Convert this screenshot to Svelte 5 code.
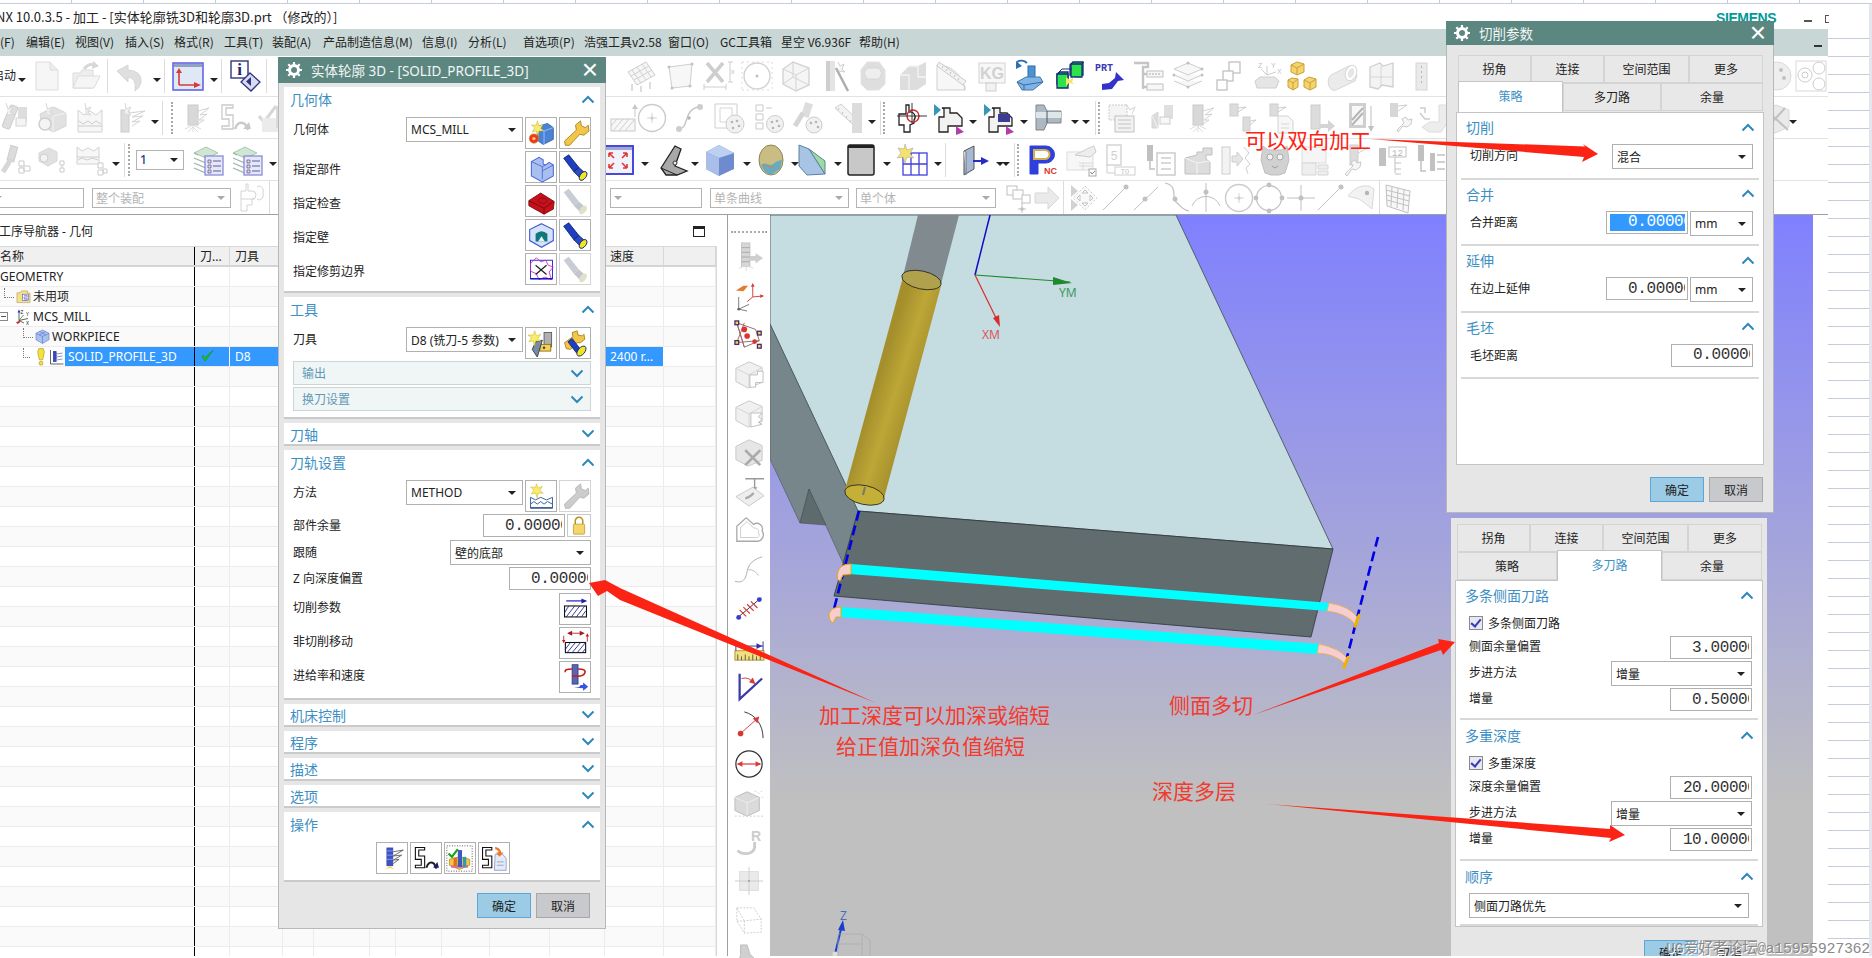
<script>
	// grey disabled toolbar art + a few coloured ones, all on a 32x32 box
	const G = '#b9b9b9';
	const ICONS = {
		doc: `<path d="M5 2h14l8 8v20H5z" fill="#f3f3f3" stroke="#d0d0d0"/><path d="M19 2v8h8" fill="#e6e6e6" stroke="#d0d0d0"/>`,
		folder: `<path d="M3 13h7l2-3h11v18H3z" fill="#e8e8e8" stroke="#cfcfcf"/><path d="M3 28l5-12h22l-6 12z" fill="#f2f2f2" stroke="#cfcfcf"/><path d="M14 9q6-7 11-3" stroke="#c8c8c8" stroke-width="3" fill="none"/><path d="M23 1l6 5-7 3z" fill="#c8c8c8"/>`,
		undo: `<path d="M3 11l11-6v5q14 1 13 12-1 6-6 9 2-13-7-14v5z" fill="#d4d4d4" stroke="#c6c6c6"/>`,
		wcs: `<rect x="1" y="3" width="30" height="27" fill="#dfe9f6" stroke="#5a5ae6" stroke-width="1.5"/><rect x="2" y="4" width="28" height="3" fill="#8fa2c4"/><path d="M7 25V11M7 25h17" stroke="#d83a3a" stroke-width="1.6"/><path d="M4 13l3-5 3 5zM22 22l7 3-7 3z" fill="#d83a3a"/>`,
		info: `<rect x="2" y="1" width="17" height="17" fill="#fff" stroke="#33337f" stroke-width="1.4"/><text x="10.5" y="15" font-size="17" font-weight="700" font-family="Liberation Serif" text-anchor="middle" fill="#25256b">i</text><path d="M21 13l10 9-9 9-10-9z" fill="#d8dcf2" stroke="#33337f" stroke-width="1.3"/><path d="M22 17v9l-5-4.500z" fill="#33337f"/>`,
		spiralp: `<rect x="8" y="3" width="8" height="24" rx="2" transform="rotate(22 12 15)" fill="#d2d2d2" stroke="#bdbdbd"/><rect x="20" y="5" width="9" height="15" fill="#d0d0d0"/><rect x="18" y="16" width="10" height="8" fill="#f0f0f0" stroke="#c4c4c4"/><path d="M8 1l2 6 5-3-3 6 4 2-6 1" fill="#eee" stroke="#c8c8c8"/>`,
		camera: `<path d="M4 12l14-7 12 6v13l-13 6-11-6z" fill="#d6d6d6" stroke="#c6c6c6"/><path d="M17 14l13-3M17 14v16" stroke="#eee"/><circle cx="9" cy="22" r="6" fill="#f1f1f1" stroke="#bcbcbc" stroke-width="1.5"/><path d="M10 1l1.500 6 5-2-3 5 4 3-6 0" fill="#e8e8e8" stroke="#cacaca"/>`,
		waves: `<path d="M4 8l6 5 6-4 6 4 6-5v22H4z" fill="#f3f3f3" stroke="#c2c2c2"/><path d="M5 19l4 3 5-3 4 3 4-3 5 3M4 24h24" stroke="${G}" fill="none"/><path d="M11 1l1 6 5-2-3 5 3 3-6-1" fill="#e4e4e4" stroke="#cacaca"/>`,
		millplan: `<rect x="7" y="8" width="8" height="22" fill="#cfcfcf" stroke="${G}"/><path d="M15 11l16-2-13 6 11-1-11 6 8-1-8 5" fill="none" stroke="#c4c4c4"/><path d="M11 1l1 6 5-2-3 5 3 3-6-1" fill="#ececec" stroke="#cacaca"/>`,
		drillstar: `<rect x="9" y="3" width="10" height="20" fill="#cacaca" stroke="#b8b8b8"/><path d="M19 9l11-3-9 7 7-1-8 6 5 0-6 4" fill="none" stroke="#c2c2c2"/><path d="M6 27l8-4 8 4M14 23v7M9 30l5-5 5 5" stroke="#d0d0d0" fill="none"/>`,
		sarrow: `<path d="M3 3h11v3H7v7h7v14H3v-3h7v-7H3zm0 0" fill="#fff" stroke="#b6b6b6" stroke-width="1.300"/><path d="M16 27q3-9 10-5l3 6" fill="none" stroke="#b6b6b6" stroke-width="2.400"/><path d="M24 27h8l-2-7z" fill="#b6b6b6"/>`,
		spt: `<rect x="10" y="2" width="7" height="15" fill="#cfcfcf" stroke="${G}" transform="rotate(15 13 9)"/><path d="M4 28l8-13" stroke="#c9c9c9" stroke-width="5"/><path d="M20 17h5v5h-5zM20 24h5v5h-5zM25 27h6v-5h-6zM22 22v2" fill="#fff" stroke="${G}"/>`,
		camt: `<path d="M3 9l10-5 8 4v9l-9 5-9-5z" fill="#d6d6d6" stroke="#c8c8c8"/><circle cx="8" cy="14" r="4" fill="#eee" stroke="#bcbcbc"/><path d="M24 17h4v4h-4zM24 24h4v4h-4zM26 21v3" fill="#fff" stroke="${G}"/>`,
		wavt: `<path d="M1 3l5 4 6-3 6 3 5-4v17H1z" fill="#f5f5f5" stroke="#c2c2c2"/><path d="M1 13h22M2 16l4-2 5 2 5-2 6 2" stroke="${G}" fill="none"/><path d="M22 19h5v5h-5zM22 26h5v5h-5zM27 29h4v-4h-4z" fill="#fff" stroke="${G}"/>`,
		layer: `<path d="M2 9l12-6 12 6-12 5z" fill="#cfe6d2" stroke="#a8c8ae"/><path d="M2 14l12 5 5-2M2 19l12 5 5-2M2 24l12 5 5-2M2 9l4 2" stroke="#9fb5a4" fill="none" stroke-width="1.200"/><rect x="13" y="12" width="18" height="19" fill="#e5e7fa" stroke="#8a8ad8" stroke-width="1.300"/><path d="M16 16h3v3h-3zM16 21h3v3h-3zM16 26h3v3h-3z" fill="#f2e47e" stroke="#4a4ad0" stroke-width=".7"/><path d="M21 17h8M21 22h8M21 27h8" stroke="#5d5d90"/>`,
		ghost: `<path d="M6 9h5V2h2v7h4a4 4 0 1 1 0 8v6h-5v6H6zM22 5a4 5 0 0 1 6 6 4 5 0 0 1-6 6" fill="#fff" stroke="#c4c4c4"/><path d="M6 17h14" stroke="#c4c4c4"/>`,
		sumcheck: `<path d="M3 14l5 6 12-16" stroke="#c8c8c8" stroke-width="3" fill="none"/><rect x="6" y="16" width="24" height="14" fill="#e4e4e4"/><rect x="20" y="4" width="8" height="22" fill="#cdcdcd"/>`,
		grid: `<path d="M4 12L22 2l9 13-18 10z" fill="#f3f3f3" stroke="#bcbcbc"/><path d="M8 10l9 13M13 7l9 13M18 4l9 13M7 16L25 6M10 20l18-10" stroke="#c2c2c2"/><path d="M8 24v7M17 26v6M26 22v7" stroke="#bdbdbd" stroke-width="1.400"/>`,
		quad: `<path d="M5 7l23-3-2 22-18 2z" fill="#f5f5f5" stroke="#bdbdbd"/><circle cx="5" cy="7" r="1.500" fill="#aaa"/><circle cx="28" cy="4" r="1.500" fill="#aaa"/><circle cx="26" cy="26" r="1.500" fill="#aaa"/><circle cx="8" cy="28" r="1.500" fill="#aaa"/>`,
		xdim: `<path d="M5 3l16 19M21 3L5 22" stroke="#bcbcbc" stroke-width="3.500"/><path d="M2 27h22M2 24v6M24 24v6M26 2h5M26 22h5M28 2v20" stroke="#bcbcbc" fill="none"/><text x="29" y="14" font-size="7" fill="#aaa" font-family="Liberation Sans">x</text>`,
		circdots: `<circle cx="16" cy="16" r="13" fill="#fff" stroke="#c2c2c2" stroke-width="1.400"/><circle cx="16" cy="16" r="1.500" fill="#aaa"/><path d="M1 2h30M1 30h30M1 2v28M31 2v28" stroke="#d0d0d0" stroke-dasharray="2 3"/>`,
		wirebox: `<path d="M3 9l10-7 16 6v17l-13 6-13-7z" fill="#f2f2f2" stroke="#c4c4c4" stroke-width="1.400"/><path d="M3 9l13 6v16M16 15l13-7M13 2v15L3 24M13 17l16 8" stroke="#c4c4c4" fill="none"/>`,
		wand: `<rect x="6" y="1" width="9" height="30" fill="#dbdbdb"/><rect x="6" y="1" width="4" height="30" fill="#bdbdbd"/><path d="M16 8l12 23" stroke="#8f8f8f" stroke-width="2.500"/><path d="M18 2l2 4 4-2-2 5 3 3-6-1" fill="#f4f4f4" stroke="#bdbdbd"/>`,
		hex: `<path d="M10 2h12l6 8v14l-6 6H10l-6-6V10z" fill="#d2d2d2" stroke="#d8d8d8"/><path d="M10 8h12l3 5-3 6H10l-3-6z" fill="#e8e8e8" stroke="#c8c8c8"/>`,
		step: `<path d="M3 15l9-9h9l8-4v22l-9 6H3z" fill="#d0d0d0"/><path d="M12 6h9v11h8M3 15h9v15" stroke="#efefef" fill="none" stroke-width="1.400"/>`,
		ruler: `<path d="M2 30V5L30 26v4zM2 5c16 0 26 12 28 25" fill="#f5f5f5" stroke="#bdbdbd"/><path d="M4 2l27 19-3 4L2 6z" fill="#eee" stroke="#b8b8b8"/><path d="M8 6l-1 2M12 9l-1 2M16 12l-1 2M20 15l-1 2M24 18l-1 2" stroke="#aaa"/>`,
		kg: `<rect x="3" y="3" width="26" height="20" fill="#f5f5f5" stroke="#c4c4c4"/><text x="16" y="19" font-size="16" font-weight="700" font-family="Liberation Sans" text-anchor="middle" fill="#c0c0c0">KG</text><rect x="10" y="23" width="10" height="8" fill="#eee" stroke="#bbb"/>`,
		mount: `<path d="M3 2a8 8 0 0 1 10 1" stroke="#2d6fb5" stroke-width="2" fill="none"/><path d="M2 1v8l6-3z" fill="#2d6fb5"/><rect x="14" y="6" width="7" height="15" fill="#4d93d3" stroke="#2c6da8"/><path d="M3 22l9-5h14l3 5-10 8H8z" fill="#7eb4e6" stroke="#4579ab"/><path d="M3 22l7 3 19-3M10 25v5" stroke="#3a6c9f" fill="none"/>`,
		green: `<path d="M3 14l3-2h8v12H3zM16 5l3-3h10v13h-3l-10 0z" fill="#1be041" stroke="#1a2a7a" stroke-width="1.300"/><path d="M3 14h11v14H3zM17 4h11v13H17z" fill="#2be34a" stroke="#1a2a7a" stroke-width="1.300"/><path d="M3 14l5-5h10M28 4l2-2" stroke="#1a2a7a" fill="none"/><path d="M12 17l4 3 4-3-2 5 2 2-5-1-3 3v-5z" fill="#f5e56b"/>`,
		prt: `<text x="1" y="11" font-size="10" font-weight="700" font-family="Liberation Mono" fill="#3a3ab4">PRT</text><path d="M8 30l10-1 6-8 6-1-8-8-1 6-6 5-7 1z" fill="#3333cc"/>`,
		tree: `<path d="M2 3h14v4h-5v22M11 14h5M11 27h5" stroke="#b0b0b0" stroke-width="2.400" fill="none"/><rect x="15" y="11" width="16" height="6" fill="#f5f5f5" stroke="#aaa"/><rect x="15" y="24" width="16" height="6" fill="#f5f5f5" stroke="#aaa"/><path d="M18 13v2M21 13v2M24 13v2M27 13v2" stroke="#888"/>`,
		layers: `<path d="M2 9L16 3l14 6-14 6zM2 15l14 6 14-6M2 21l14 6 14-6" fill="#f4f4f4" stroke="#bcbcbc"/><circle cx="16" cy="3" r="1.500" fill="#aaa"/><circle cx="30" cy="9" r="1.500" fill="#aaa"/><circle cx="2" cy="15" r="1.500" fill="#aaa"/><circle cx="30" cy="15" r="1.500" fill="#aaa"/><circle cx="16" cy="27" r="1.500" fill="#aaa"/>`,
		steps: `<rect x="17" y="2" width="11" height="11" fill="#fff" stroke="#aaa" stroke-width="1.300"/><rect x="11" y="11" width="10" height="10" fill="#fff" stroke="#aaa" stroke-width="1.300"/><rect x="5" y="20" width="10" height="10" fill="#fff" stroke="#aaa" stroke-width="1.300"/>`,
		zyx: `<path d="M4 21l5-4h15l4 4-3 7H6z" fill="#dcdcdc" stroke="#bdbdbd"/><path d="M16 15V6M16 15l-6-6M16 15l9-3" stroke="#bbb"/><text x="7" y="8" font-size="7" fill="#aaa" font-family="Liberation Sans">Z</text><text x="20" y="8" font-size="7" fill="#aaa" font-family="Liberation Sans">Y</text><text x="26" y="14" font-size="7" fill="#aaa" font-family="Liberation Sans">X</text>`,
		gold: `<g fill="#f5d36f" stroke="#c9a135"><path d="M9 2l7 2v8l-7 3-6-3V5z"/><path d="M4 18l6 1v8l-5 3-5-3v-7z"/><path d="M21 17l7 2v8l-6 3-6-3v-7z"/></g><path d="M3 5l6 3 7-4M9 8v7M0 20l5 3 5-4M5 23v7M16 20l6 3 6-4M22 23v7" stroke="#c9a135" fill="none"/>`,
		cyl: `<path d="M4 15L22 6a6.500 9 0 0 1 6 15l-17 8a6 8 0 0 1-7-14z" fill="#e4e4e4" stroke="#c8c8c8"/><ellipse cx="24" cy="13" rx="5.500" ry="8" fill="#fff" stroke="#c8c8c8" transform="rotate(20 24 13)"/><ellipse cx="24" cy="13" rx="3" ry="5" fill="#ddd" transform="rotate(20 24 13)"/>`,
		sheet: `<path d="M4 7l10-4 3 3 10-3v24l-11-2-4 4-8-2z" fill="#efefef" stroke="#bdbdbd" stroke-width="1.300"/><path d="M15 6v21M4 17h23" stroke="#c8c8c8"/>`,
		bar: `<rect x="11" y="3" width="11" height="27" fill="#e2e2e2" stroke="#c6c6c6"/><path d="M16.500 6v20" stroke="#9a9a9a" stroke-dasharray="2 3"/>`,
		hatchup: `<rect x="4" y="17" width="24" height="12" fill="#f5f5f5" stroke="#b4b4b4"/><path d="M6 29l10-12M12 29l10-12M18 29l9-11M4 24l6-7" stroke="#bcbcbc"/><path d="M28 15V4" stroke="#b4b4b4"/><path d="M25 7l3-5 3 5z" fill="#b4b4b4"/>`,
		circpt: `<circle cx="16" cy="16" r="13.500" fill="#fff" stroke="#b8b8b8" stroke-width="1.400"/><circle cx="16" cy="16" r="1.500" fill="#999"/><path d="M16 11v10M11 16h10" stroke="#c4c4c4"/>`,
		curve: `<path d="M5 27c10 0 4-20 20-22" fill="none" stroke="#b0b0b0" stroke-width="1.400"/><circle cx="5" cy="27" r="3" fill="#bbb"/><circle cx="26" cy="5" r="3" fill="#bbb"/><circle cx="15" cy="16" r="1.800" fill="#999"/>`,
		framepal: `<path d="M2 2h22v24H2z" fill="#fff" stroke="#bcbcbc"/><path d="M7 6h12v14H7z" fill="none" stroke="#c6c6c6"/><circle cx="22" cy="22" r="9" fill="#ececec" stroke="#bbb"/><circle cx="19" cy="20" r="1.300" fill="#999"/><circle cx="24" cy="19" r="1.300" fill="#999"/><circle cx="26" cy="24" r="1.300" fill="#999"/><circle cx="20" cy="26" r="1.300" fill="#999"/>`,
		treepal: `<path d="M3 3h7v6H3zM3 12h7v6H3zM3 21h7v6H3zM13 6h6" fill="#fff" stroke="#b6b6b6"/><circle cx="22" cy="22" r="8.500" fill="#ececec" stroke="#bbb"/><circle cx="19" cy="20" r="1.300" fill="#999"/><circle cx="24" cy="19" r="1.300" fill="#999"/><circle cx="26" cy="24" r="1.300" fill="#999"/><circle cx="20" cy="26" r="1.300" fill="#999"/>`,
		toolpal: `<rect x="11" y="1" width="8" height="14" fill="#d0d0d0" transform="rotate(18 15 8)"/><path d="M3 24l8-13" stroke="#c6c6c6" stroke-width="5"/><circle cx="22" cy="23" r="8" fill="#ececec" stroke="#bbb"/><circle cx="19" cy="21" r="1.300" fill="#999"/><circle cx="24" cy="20" r="1.300" fill="#999"/><circle cx="26" cy="25" r="1.300" fill="#999"/>`,
		rulerv: `<path d="M3 6l6-4 21 20-3 6z" fill="#efefef" stroke="#bdbdbd"/><rect x="20" y="1" width="10" height="30" fill="#cfcfcf"/><path d="M7 6l-1 2M11 10l-1 2M15 14l-1 2M19 18l-1 2" stroke="#aaa"/>`,
		redcirc: `<path d="M3 12h7V3h3v7a5 5 0 0 1 5 8v3l-4 2v7H8v-7H3z" fill="#fff" stroke="#222" stroke-width="1.300"/><circle cx="17" cy="14" r="6" fill="none" stroke="#d8262c" stroke-width="1.400"/><path d="M1 14h30M16 1v20" stroke="#222" stroke-width=".9"/>`,
		nozzle1: `<path d="M1 2l7 6-7 6z" fill="#3896b8"/><path d="M9 6h8v5h7l5 5v8H15v6H6V15h5V7z" fill="#f2f2f2" stroke="#222" stroke-width="1.300"/><path d="M23 24l8 6-8 3z" fill="#b43dac"/>`,
		nozzle2: `<path d="M1 2l7 6-7 6z" fill="#3896b8"/><path d="M9 6h8v5h7l5 5v8H15v6H6V15h5V7z" fill="#f2f2f2" stroke="#222" stroke-width="1.300"/><path d="M15 12h12v8H15z" fill="#3c3c96"/><path d="M23 24l8 6-8 3z" fill="#b43dac"/>`,
		nozzle3: `<path d="M3 3h8l3 6h14v12H14l-3 7H3z" fill="#aeb8c0" stroke="#7a858c"/><path d="M3 10h25v6H3z" fill="#dfe6ea"/><path d="M14 9v12" stroke="#4b5860"/>`,
		clip: `<rect x="3" y="3" width="18" height="15" fill="#f0f0f0" stroke="#bbb" stroke-dasharray="2 1"/><rect x="9" y="14" width="19" height="16" fill="#eee" stroke="#aaa"/><path d="M12 18h13M12 22h13M12 26h13" stroke="#aaa"/><path d="M20 2l4 6 5-3-3 7" stroke="#c4c4c4" fill="none"/>`,
		barrel: `<path d="M6 14l6-4v16H6z" fill="#cfcfcf" stroke="#c6c6c6"/><path d="M6 14l6 12" stroke="#eee"/><rect x="18" y="3" width="9" height="14" fill="#d4d4d4"/><rect x="14" y="15" width="10" height="7" fill="#f5f5f5" stroke="#bbb"/>`,
		opl1: `<rect x="6" y="2" width="8" height="12" fill="#cfcfcf" stroke="#bbb"/><path d="M14 6l8-1-8 5" stroke="#bbb" fill="none"/><rect x="19" y="15" width="7" height="14" fill="#cfcfcf" stroke="#bbb"/><path d="M26 19l6-1-6 5" stroke="#bbb" fill="none"/>`,
		opl2: `<rect x="6" y="2" width="8" height="12" fill="#cfcfcf" stroke="#bbb"/><path d="M14 6l8-1-8 5" stroke="#bbb" fill="none"/><path d="M14 14h10l5 5v12H14z" fill="#f4f4f4" stroke="#c4c4c4"/><path d="M17 22h8M17 26h8" stroke="#c8c8c8"/>`,
		oparrow: `<rect x="7" y="3" width="9" height="24" fill="#cfcfcf" stroke="#bbb"/><path d="M16 22h8v-4l7 6-7 6v-4h-8z" fill="#c4c4c4"/>`,
		hatcht: `<rect x="6" y="1" width="17" height="25" fill="#bdbdbd"/><rect x="9" y="4" width="11" height="19" fill="#f6f6f6"/><path d="M9 18l11-12M9 23l11-12" stroke="#999" stroke-width="2"/><path d="M28 4v22" stroke="#a8a8a8"/><path d="M25 24h6l-3 6z" fill="#a8a8a8"/>`,
		wrench2: `<rect x="6" y="1" width="8" height="14" fill="#c8c8c8"/><path d="M14 4l9-1-9 6" stroke="#bbb" fill="none"/><path d="M13 28l7-7-2-4 4-2 2 3 4-1-1 5-4 3-4-1-5 6z" fill="#f3f3f3" stroke="#b6b6b6"/>`,
		machine: `<path d="M22 3h8v18l-6 9H12l-7-5 8-5h9z" fill="#e7e7e7" stroke="#d0d0d0"/><path d="M3 6h5v5M3 11l5 6h5" stroke="#bbb" fill="none" stroke-width="1.500"/>`,
		full: `<rect x="1" y="2" width="30" height="28" fill="#f0f3fb" stroke="#4848e0" stroke-width="2"/><rect x="2" y="3" width="28" height="3" fill="#9fa8d0"/><path d="M7 9l5 5M7 9v4M7 9h4M25 24l-5-5M25 24v-4M25 24h-4M25 9l-5 5M25 9v4M25 9h-4M7 24l5-5M7 24v-4M7 24h4" stroke="#e4352d" stroke-width="1.600" fill="none"/>`,
		lshape: `<path d="M4 24L18 2l6 3-6 17 12 5-10 4H9z" fill="#a8a8a8" stroke="#222" stroke-width="1.300"/><path d="M4 24l16 7" stroke="#222"/><circle cx="18" cy="19" r="2" fill="#eee" stroke="#333"/>`,
		bluebox: `<path d="M2 8L15 1l15 8v16l-15 7-13-7z" fill="#6f8bd0"/><path d="M2 8l13 6 15-5-15-8z" fill="#bcd0f2"/><path d="M2 8l13 6v18L2 25z" fill="#a9bfea"/>`,
		egg: `<ellipse cx="16" cy="16" rx="12" ry="15" fill="#c9bd83" stroke="#8a8558"/><path d="M6 21c5-4 8 2 12-1s7-4 9-4l-2 9-9 6-6-3z" fill="#6aaac0"/><path d="M9 22c4-1 6 3 10 0" stroke="#c84" fill="none"/>`,
		wedge: `<path d="M4 1l10 4 16 25-18 1-8-9z" fill="#a7c4e4" stroke="#5c7fa4"/><path d="M14 5l16 12 0 13z" fill="#9edb9e" stroke="#5c7fa4"/>`,
		panel: `<rect x="3" y="1" width="26" height="30" rx="2" fill="#c8c8c8" stroke="#222" stroke-width="1.500"/><rect x="3" y="1" width="26" height="3" fill="#222"/>`,
		gridstar: `<rect x="6" y="9" width="24" height="22" fill="#fff" stroke="#4040dc" stroke-width="1.300"/><path d="M14 9v22M22 9v22M6 20h24" stroke="#4040dc" stroke-width="1.300"/><path d="M8 0l2 6 6-2-3 6 4 4-7-1-2 6-2-6-6 1 4-5-3-5 6 1z" fill="#f4e26a" stroke="#aaa" stroke-width=".6"/>`,
		plate: `<path d="M5 7l10-5v23l-10 6z" fill="#a7b8d4" stroke="#555"/><path d="M5 7l2 1v23" fill="#eee" stroke="#777"/><path d="M14 17h9" stroke="#2a2ac8" stroke-width="2"/><path d="M22 13l8 4-8 4z" fill="#2a2ac8"/>`,
		pnc: `<path d="M3 2h16a8 8 0 0 1 0 17h-8v11H3z" fill="#2e3fdc" stroke="#2e3fdc"/><path d="M7 6h11a4 4 0 0 1 0 9H7z" fill="#fff" stroke="#d1b04a" stroke-width="2"/><text x="17" y="30" font-size="9" font-weight="700" fill="#d8382f" font-family="Liberation Sans">NC</text>`,
		note: `<rect x="2" y="8" width="26" height="18" fill="#f4f4f4" stroke="#cfcfcf"/><path d="M14 19h14M14 22h14M18 19v7" stroke="#ccc"/><path d="M10 11l14-7 5-2 2 6-6 5z" fill="#e7e7e7" stroke="#bbb"/><rect x="24" y="25" width="7" height="7" fill="#fff" stroke="#888"/><path d="M25.500 28l1.500 2 3-3" stroke="#555" fill="none"/>`,
		sto: `<rect x="3" y="1" width="14" height="20" fill="#fff" stroke="#bdbdbd" stroke-width="1.300"/><text x="10" y="16" font-size="12" fill="#bdbdbd" font-family="Liberation Mono" text-anchor="middle">5</text><path d="M3 21v8h8" stroke="#bbb" fill="none"/><rect x="11" y="23" width="20" height="8" fill="#fff" stroke="#bdbdbd"/><text x="21" y="30" font-size="7" fill="#aaa" font-family="Liberation Mono" text-anchor="middle">TO</text>`,
		arrowl: `<rect x="3" y="1" width="6" height="16" fill="#a8a8a8"/><path d="M6 17v8h5" stroke="#aaa" fill="none" stroke-width="1.500"/><rect x="13" y="9" width="18" height="22" fill="#fff" stroke="#bdbdbd" stroke-width="1.600"/><path d="M17 14h10M17 19h10M17 25h10" stroke="#bbb" stroke-width="1.500"/>`,
		machbox: `<path d="M4 14l12-3v-3h6V4h9v7h-6v4l4 3v12H4z" fill="#d0d0d0" stroke="#a8a8a8"/><path d="M4 14l12 5 13-2M16 19v11" stroke="#f1f1f1" fill="none"/>`,
		doorzig: `<rect x="2" y="3" width="8" height="27" fill="#efefef" stroke="#bcbcbc"/><path d="M12 12h5v-4l6 7-6 7v-4h-5z" fill="#dcdcdc" stroke="#bcbcbc"/><path d="M24 3l5 6-4 5 5 6-4 4 2 6" fill="none" stroke="#bcbcbc"/>`,
		owl: `<path d="M4 2l5 4h14l5-4 2 14-4 13-6 2h-8l-6-2-4-13z" fill="#c0c0c0" stroke="#a6a6a6"/><circle cx="11" cy="13" r="3" fill="#eee" stroke="#888"/><circle cx="21" cy="13" r="3" fill="#eee" stroke="#888"/><path d="M13 22l3 2 3-2" stroke="#777" fill="none"/>`,
		sbox: `<rect x="4" y="3" width="24" height="16" fill="#f2f2f2" stroke="#d0d0d0"/><path d="M4 19h14v12H4zM20 21h10v4H20zM20 27h10v4H20z" fill="#e8e8e8" stroke="#c6c6c6"/>`,
		mwrench: `<rect x="11" y="1" width="8" height="20" fill="#cfcfcf" stroke="#bbb"/><path d="M19 5l10-1-10 5" stroke="#bbb" fill="none"/><path d="M6 30l8-8-2-4 4-2 2 3 4-1-1 5-4 3-4-1-5 7z" fill="#f3f3f3" stroke="#b6b6b6"/>`,
		tree12: `<rect x="2" y="4" width="7" height="18" fill="#aaa"/><rect x="12" y="3" width="17" height="10" fill="#fff" stroke="#aaa"/><text x="20.500" y="12" font-size="9" fill="#999" font-family="Liberation Mono" text-anchor="middle">12</text><path d="M18 13v16M18 19h6M18 25h6M18 30h6" stroke="#aaa"/>`,
		arrowt: `<rect x="3" y="1" width="6" height="16" fill="#a8a8a8"/><path d="M6 17v10h5" stroke="#aaa" fill="none" stroke-width="1.500"/><rect x="15" y="9" width="5" height="18" fill="#aaa"/><path d="M22 11h8M22 18h8M22 25h8" stroke="#aaa" stroke-width="1.500"/>`,
		treea: `<rect x="3" y="4" width="10" height="9" fill="#fff" stroke="#aaa"/><rect x="9" y="8" width="10" height="9" fill="#fff" stroke="#aaa"/><rect x="18" y="13" width="8" height="8" fill="#fff" stroke="#aaa"/><path d="M18 21v10M14 27h8" stroke="#aaa"/><circle cx="18" cy="27" r="1.800" fill="#aaa"/>`,
		arrowr: `<path d="M4 11h13V5l11 11-11 11v-6H4z" fill="#e2e2e2" stroke="#c8c8c8"/>`,
		diamond: `<path d="M2 3l7 6-7 6zM2 17l7 6-7 6z" fill="#c2c2c2"/><path d="M16 4l12 12-12 12L4 16z" fill="#f7f7f7" stroke="#bbb" stroke-dasharray="2 2"/><path d="M16 8l3 3h-6zM16 24l3-3h-6zM8 16l3-3v6zM24 16l-3-3v6z" fill="#fff" stroke="#aaa"/>`,
		line1: `<path d="M4 28L27 5" stroke="#aaa"/><circle cx="27" cy="5" r="2.500" fill="#aaa"/>`,
		line2: `<path d="M4 28L28 5" stroke="#aaa"/><circle cx="15" cy="17" r="2.500" fill="#aaa"/>`,
		curve2: `<path d="M5 1c14 3 6 15 11 19s6 8 13 9" fill="none" stroke="#a8a8a8" stroke-width="1.200"/><circle cx="15" cy="17" r="2.500" fill="#aaa"/>`,
		arc: `<path d="M2 24a15 15 0 0 1 28 0M16 1v29" stroke="#a8a8a8" fill="none"/><circle cx="16" cy="10" r="2.500" fill="#aaa"/>`,
		circ4: `<circle cx="16" cy="16" r="12.500" fill="none" stroke="#aaa" stroke-width="1.200"/><g fill="#aaa"><circle cx="16" cy="3" r="2.400"/><circle cx="16" cy="29" r="2.400"/><circle cx="3" cy="16" r="2.400"/><circle cx="29" cy="16" r="2.400"/></g>`,
		cross: `<path d="M2 16h28M16 3v26" stroke="#aaa"/><circle cx="16" cy="16" r="2.500" fill="#aaa"/>`,
		surf: `<path d="M3 14Q12 2 24 4l5 3-2 20-10-8c-5-4-10-3-14-5z" fill="#eee" stroke="#ccc"/><circle cx="22" cy="11" r="2.200" fill="#999"/>`,
		mesh: `<path d="M4 3l24 6-2 22L5 24z" fill="#f5f5f5" stroke="#aaa"/><path d="M10 4.500l-1 20M16 6l-1 20M22 7.500l-1 21M4 8l24 6M4 13l23 6M5 18l22 6" stroke="#aaa"/>`,
		palette2: `<circle cx="16" cy="16" r="14" fill="#e8e8e8" stroke="#ccc"/><circle cx="11" cy="11" r="2" fill="#aaa"/><circle cx="20" cy="10" r="2" fill="#aaa"/><circle cx="23" cy="18" r="2" fill="#aaa"/>`,
		circles3: `<rect x="1" y="1" width="30" height="30" fill="#fff" stroke="#ccc"/><circle cx="10" cy="15" r="7" fill="none" stroke="#bbb"/><circle cx="10" cy="15" r="3" fill="none" stroke="#bbb"/><circle cx="24" cy="8" r="6" fill="none" stroke="#bbb"/><circle cx="24" cy="24" r="6" fill="none" stroke="#bbb"/>`,
		boxg: `<path d="M1 9l14-6 13 5v17l-14 6-13-6z" fill="#e2e2e2" stroke="#ccc"/><path d="M3 6l24 22M24 6L6 26" stroke="#aaa" stroke-width="2"/>`,
		// left strip
		millar: `<rect x="8" y="1" width="9" height="25" fill="#d6d6d6" stroke="#c6c6c6"/><path d="M8 6h9M8 11h9M8 16h9M8 21h9" stroke="#aaa"/><path d="M17 15h6v-3l8 5-8 6v-3h-6z" fill="#cfcfcf"/><path d="M5 28l8-3 8 3M13 26v5" stroke="#ddd" fill="none"/>`,
		axes: `<path d="M2 10l8-5h5l-5 6z" fill="#e67a2e"/><path d="M20 17V4M20 17l11-1M20 17l-6 5" stroke="#d83a3a"/><path d="M18 6l2-4 2 4zM28 14l4 2-4 2z" fill="#d83a3a"/><path d="M5 30V17M5 30l11-5M5 30l9 2" stroke="#777"/><circle cx="5" cy="30" r="1.500" fill="#666"/>`,
		nodes: `<path d="M3 3l8 26M3 3l20 7 4 12-16 7zM3 24l24-2M3 24l8-21" fill="none" stroke="#9a6666"/><g fill="#d8362e"><circle cx="11" cy="10" r="3"/><circle cx="14" cy="17" r="3"/><circle cx="22" cy="23" r="2.500"/></g><g fill="#f1d84b" stroke="#4a2a70" stroke-width="1.400"><rect x="1" y="1" width="4" height="4"/><rect x="25" y="12" width="4" height="4"/><rect x="1" y="22" width="4" height="4"/><rect x="25" y="26" width="4" height="4"/></g>`,
		cube1: `<path d="M2 10l14-7 14 6v16l-15 6-13-7z" fill="#f0f0f0" stroke="#c8c8c8"/><path d="M2 10l14 7 14-8M16 17v14" stroke="#d4d4d4" fill="none"/><path d="M17 17h8v-4h6v12h-8v5h-6z" fill="#fff" stroke="#bcbcbc"/>`,
		cube2: `<path d="M2 10l14-7 14 6v16l-15 6-13-7z" fill="#f0f0f0" stroke="#c8c8c8"/><path d="M2 10l14 7 14-8M16 17v14" stroke="#d4d4d4" fill="none"/><path d="M18 16h12l-4 4 4 3-4 3 4 2-12 3z" fill="#fff" stroke="#bcbcbc"/>`,
		cube3: `<path d="M2 10l14-7 14 6v16l-15 6-13-7z" fill="#e6e6e6" stroke="#c8c8c8"/><path d="M12 14l16 16M28 14L12 30" stroke="#aaa" stroke-width="3"/>`,
		stamp: `<path d="M12 3h20M22 3v10" stroke="#999" stroke-width="1.500"/><path d="M19 12h6l-3 4z" fill="#999"/><path d="M2 22L20 12l12 9-16 11z" fill="#eee" stroke="#c8c8c8"/><path d="M12 24q6-2 9-6" stroke="#aaa" stroke-width="2.500" fill="none"/>`,
		heart: `<path d="M3 12L13 3l8 7a6 6 0 0 1 9 7 7 7 0 0 1-5 11H3z" fill="#fff" stroke="#aaa" stroke-width="1.400"/><path d="M7 13l7-6 7 7a4 4 0 0 1 5 5 3 3 0 0 1-3 5H7z" fill="none" stroke="#ccc"/>`,
		curvs: `<path d="M1 29c12 4 12-8 14-14s8-10 15-12" stroke="#aaa" fill="none"/><path d="M14 17c4-1 9 1 12 6" stroke="#bbb" fill="none"/>`,
		redh: `<path d="M3 27L29 5" stroke="#333" stroke-width="1"/><path d="M6 18l7 7M10 15l7 7M14 12l7 7M18 9l7 7" stroke="#d83a3a" stroke-width="1.300"/><circle cx="5" cy="26" r="2.600" fill="#3a3ad0"/><circle cx="27" cy="7" r="2.600" fill="#3a3ad0"/>`,
		rulerb: `<rect x="1" y="20" width="31" height="10" fill="#f2e07f" stroke="#a9932f"/><path d="M4 24v6M8 26v4M12 24v6M16 26v4M20 24v6M24 26v4M28 24v6" stroke="#555"/><path d="M2 15h29M2 10v10M31 10v10" stroke="#3030a8" fill="none"/><path d="M3 15l6-3v6zM30 15l-6-3v6z" fill="#3030a8"/>`,
		tri: `<path d="M6 3v27L30 8" stroke="#3a3aa8" stroke-width="2.400" fill="none"/><path d="M8 8q8-2 12 4" stroke="#d83a3a" fill="none"/><path d="M20 7l3 7-7-2z" fill="#d83a3a"/>`,
		arcr: `<path d="M11 2c12 3 20 14 20 28" stroke="#333" fill="none"/><path d="M7 25L24 10" stroke="#d83a3a"/><circle cx="7" cy="25" r="3" fill="#d8362e"/><path d="M20 9l7-2-2 7z" fill="#d83a3a"/>`,
		circr: `<circle cx="16" cy="16" r="14" fill="#fff" stroke="#333" stroke-width="1.300"/><path d="M4 16h24" stroke="#d83a3a" stroke-width="1.300"/><path d="M3 16l6-3v6zM29 16l-6-3v6z" fill="#d83a3a"/>`,
		cubedots: `<path d="M1 10l13-6 13 6v14l-13 6-13-6z" fill="#dadada" stroke="#bbb"/><path d="M1 10l13 6 13-6M14 16v14" stroke="#eee" fill="none"/><path d="M22 3l5 3 3-3M26 10h5M1 30h30" stroke="#ccc" stroke-dasharray="2 2" fill="none"/>`,
		rhook: `<text x="18" y="15" font-size="15" font-weight="700" fill="#ccc" font-family="Liberation Sans">R</text><path d="M22 16v6c-2 8-14 8-18 3" stroke="#ccc" stroke-width="3" fill="none"/>`,
		crossb: `<rect x="6" y="6" width="20" height="20" fill="#eaeaea" stroke="#ddd"/><path d="M16 1v30M1 16h30" stroke="#ccc"/><circle cx="16" cy="16" r="1" fill="#999"/>`,
		wire2: `<path d="M3 3l18 0 8 12v14l-18 1-8-13z" fill="#fff" stroke="#ccc" stroke-dasharray="2 1.500"/><path d="M3 17l8 0 18-2M11 17v13M3 3l8 14" stroke="#ccc" stroke-dasharray="2 1.500" fill="none"/>`,
		tooln: `<path d="M7 1h7l3 10 11 10-4 10H8l-4-10 3-9z" fill="#d0d0d0" stroke="#bbb"/>`,
		// dialog buttons
		gnew: `<path d="M11 8l12-4 7 5v14l-12 6-7-5z" fill="#4a83d6" stroke="#2e5fa8"/><path d="M11 8l8 5 11-4M19 13v16" stroke="#a9c9f2" fill="none"/><path d="M11 1l2 6 5-2-3 5 4 3-6 0-1 6-2-6-5 1 3-5-4-3 6 0z" fill="#f8ed6b" stroke="#c8b02e" stroke-width=".6"/><circle cx="7" cy="22" r="5.500" fill="#f0342a" stroke="#c82"/><circle cx="7" cy="22" r="2" fill="#f7d34e"/>`,
		wrench: `<path d="M3 25l14-13-1-6 6-5 1 6 5 2 3-3 1 7-6 5-5-1-12 13-5 0z" fill="#f2c648" stroke="#a77d16"/>`,
		wrenchg: `<path d="M3 25l14-13-1-6 6-5 1 6 5 2 3-3 1 7-6 5-5-1-12 13-5 0z" fill="#ccc" stroke="#b3b3b3"/>`,
		part: `<path d="M4 9l9-5 5 3v5l3 1 4-3 5 3v13l-13 7-13-7z" fill="#a8c0f0" stroke="#4d63d8" stroke-width="1.200"/><path d="M4 9l13 6v15M17 15l4-2M30 13l-13 7" stroke="#4d63d8" fill="none"/>`,
		flash: `<path d="M2 5l6-4 12 15-6 5z" fill="#1f3fc0" stroke="#0d226b"/><path d="M20 16l9 8-5 7-10-10z" fill="#2a4bc4" stroke="#0d226b"/><ellipse cx="25" cy="26" rx="6" ry="3.500" transform="rotate(-52 25 26)" fill="#f2e41f" stroke="#0d226b"/>`,
		flashg: `<path d="M2 5l6-4 12 15-6 5z" fill="#c8ccd4"/><path d="M20 16l9 8-5 7-10-10z" fill="#c2c6ce"/><ellipse cx="25" cy="26" rx="6" ry="3.500" transform="rotate(-52 25 26)" fill="#dfe2c8"/>`,
		redpart: `<path d="M1 15L15 6l16 10-1 9-11 6L1 21z" fill="#c8101a" stroke="#6c0a10"/><path d="M1 15l18 9 11-8M19 24v7" stroke="#6c0a10" fill="none"/><ellipse cx="17" cy="15" rx="5" ry="3" fill="none" stroke="#7c1018"/>`,
		wall: `<path d="M16 2L30 9v13l-14 8-14-8V9z" fill="#d5e2f8" stroke="#4058d8" stroke-width="1.300"/><path d="M9 23v-9q7-6 14 0v9z" fill="#10777f"/><path d="M12 23l4-6 4 6z" fill="#e8f4f4"/>`,
		trim: `<rect x="3" y="5" width="26" height="22" fill="#fff" stroke="#1010c8"/><path d="M3 9l7-7 5 5 6-2 3 6 6 2-5 6 3 9-8-3-7 3-3-7-7-3z" fill="none" stroke="#d020d0"/><path d="M9 11l13 11M22 11L9 22" stroke="#222" stroke-width="1.500"/><path d="M3 27h26" stroke="#1010c8" stroke-width="1.600"/>`,
		tstar: `<rect x="19" y="3" width="9" height="17" fill="#b0b0b0" stroke="#555"/><rect x="14" y="17" width="13" height="8" fill="#f6cf55" stroke="#8a6a10"/><circle cx="19" cy="21" r="1.500" fill="#444"/><path d="M9 14l8-2-6 20-6-9z" fill="#778ba8" stroke="#333"/><path d="M8 1l2 6 5-2-3 5 3 3-6 0-1 6-2-6-5 1 3-5-4-3 6 0z" fill="#f8ed6b" stroke="#c8b02e" stroke-width=".6"/>`,
		wrflash: `<path d="M3 15l10-7-1-5 6-2 1 5 5 1 2-2 1 6-5 4-4 0-8 8-5-1z" fill="#f2c648" stroke="#a77d16"/><path d="M7 14l5-4 10 13-5 4z" fill="#1f3fc0" stroke="#0d226b"/><ellipse cx="23" cy="25" rx="7" ry="4" transform="rotate(-50 23 25)" fill="#f2e41f" stroke="#0d226b"/>`,
		method: `<path d="M3 17l6 3 6-3 7 3 7-3v13H3z" fill="#fff" stroke="#1c4a8c"/><path d="M3 25l4-3 4 3 4-3 4 3 4-3 6 3M3 29h26" stroke="#1c4a8c" fill="none"/><path d="M10 1l2 5 5-2-3 5 4 3-6 0-1 6-2-6-5 1 3-5-4-3 6 0z" fill="#f8ed6b" stroke="#c8b02e" stroke-width=".6"/>`,
		lock: `<path d="M10 13V8a6 6 0 0 1 12 0v5" fill="none" stroke="#b59320" stroke-width="2.400"/><rect x="7" y="13" width="18" height="16" rx="1.500" fill="#f4d66a" stroke="#a88815"/>`,
		hatch1: `<rect x="3" y="13" width="26" height="13" fill="#fff" stroke="#111" stroke-width="1.300"/><path d="M5 26l10-13M11 26l10-13M17 26l10-13M23 26l5-7M3 21l5-8" stroke="#1a1a90"/><path d="M5 7h20" stroke="#1f1fb0" stroke-width="1.400"/><path d="M23 4l7 3-7 3z" fill="#1f1fb0"/>`,
		hatch2: `<rect x="4" y="16" width="24" height="12" fill="#fff" stroke="#111" stroke-width="1.300"/><path d="M6 28l10-12M12 28l10-12M18 28l10-12M24 28l4-5M4 24l6-8" stroke="#1a1a90"/><path d="M8 5h17" stroke="#a81a1a"/><path d="M6 5l6-3v6zM27 5l-6-3v6z" fill="#a81a1a"/><path d="M2 15V8M30 15V8" stroke="#c81a1a"/><path d="M0 13h4l-2 4zM28 9h4l-2-4z" fill="#c81a1a"/>`,
		feed: `<rect x="12" y="2" width="7" height="23" fill="#5a64b0" stroke="#2f3d8a"/><path d="M4 11q-2-4 8-4M19 7q10 0 8 5-2 5-15 3" stroke="#c81a1a" stroke-width="1.800" fill="none"/><path d="M14 29q8 0 8-3h3v-3l6 5-6 5v-3z" fill="#3a50e0"/>`,
		opmill: `<rect x="10" y="3" width="8" height="22" fill="#3f50c0"/><path d="M10 7h8M10 12h8M10 17h8" stroke="#8ca4f2"/><path d="M18 8l12-2-12 7 10-1-10 6 7-1-7 5" fill="none" stroke="#555"/><path d="M8 29l6-4 6 4-6-2z" fill="#f0d24a"/>`,
		ops: `<path d="M4 3h11v3H8v7h7v14H4v-3h7v-7H4z" fill="#fff" stroke="#111" stroke-width="1.300"/><path d="M17 27q3-9 9-5l3 6" fill="none" stroke="#222" stroke-width="2.400"/><path d="M25 27h7l-2-7z" fill="#1c1c6c"/>`,
		opcheck: `<rect x="1" y="1" width="30" height="30" fill="none" stroke="#222" stroke-dasharray="1 2"/><path d="M3 10l4 4 7-9" stroke="#1ba01b" stroke-width="2.500" fill="none"/><path d="M4 17l12-3 12 3v7l-12 5-12-5z" fill="#f1c94a" stroke="#b59320"/><path d="M6 24h20v3H6z" fill="#e06aa0"/><rect x="14" y="6" width="5" height="20" fill="#3d58c0"/><rect x="20" y="14" width="4" height="12" fill="#2aa0a8"/><rect x="9" y="15" width="4" height="10" fill="#e07020"/>`,
		opdoc: `<path d="M3 3h11v3H7v7h7v14H3v-3h7v-7H3z" fill="#fff" stroke="#111" stroke-width="1.300"/><path d="M18 11l9 0 4 5v14H17z" fill="#e6eaf6" stroke="#8a98c8"/><path d="M20 20h8M20 24h8" stroke="#8a98c8"/><path d="M18 2q7 2 7 7h3l-5 5-4-5h3q0-3-4-4z" fill="#ea7a2a"/>`,
		// navigator
		nfolder: `<path d="M2 8h7l2-4h14v5h5v20H2z" fill="#f3e08a" stroke="#9a8636"/><rect x="14" y="11" width="13" height="14" fill="#fff" stroke="#2a2ab8"/><path d="M17 14h7v3h-7v3h7v3h-7" fill="none" stroke="#2a2ab8"/>`,
		ntriad: `<path d="M8 23V5M8 23l18-4M8 23l10 5" stroke="#111" fill="none" stroke-width="1.300"/><path d="M8 23l9-11" stroke="#1e8a1e" stroke-width="1.500"/><path d="M2 27l7-4 1 4-5 3z" fill="#d8262c"/><path d="M5 7l3-6 3 6z" fill="#2a2ac8"/><text x="11" y="9" font-size="9" font-family="Liberation Sans" fill="#111">Z</text><text x="22" y="14" font-size="9" font-family="Liberation Sans" fill="#111">Y</text><text x="22" y="31" font-size="9" font-family="Liberation Sans" fill="#111">X</text>`,
		ncube: `<path d="M16 2L30 9v14l-14 8-14-8V9z" fill="#a9c0ee" stroke="#4762c8"/><path d="M2 9l14 7 14-7M16 16v15M9 5l14 8M23 5L9 13" stroke="#4762c8" fill="none"/>`,
		nbulb: `<path d="M12 1h8l2 6-3 14h-6L10 7z" fill="#f5e13a" stroke="#a08a1a"/><circle cx="16" cy="27" r="3.500" fill="#f5e13a" stroke="#a08a1a"/>`,
		nop: `<path d="M3 2v28h26" stroke="#111" fill="none" stroke-width="1.300"/><rect x="8" y="4" width="7" height="22" fill="#3f50c0"/><path d="M10 8h6M10 13h6M10 18h6M15 10l12-2M15 16l12-2M15 22l12-2" stroke="#1c2a80"/>`,
		ncheck: `<path d="M4 16l7 10L28 3q-11 8-16 15l-4-4z" fill="#1ec41e" stroke="#0e7a0e"/>`
	};

	// the enabled, coloured toolbar icons; everything else on the bars is washed out
	const COLOURED = new Set(['wcs', 'info', 'layer', 'mount', 'green', 'prt', 'gold', 'redcirc', 'nozzle1', 'nozzle2', 'nozzle3', 'full', 'lshape', 'bluebox', 'egg', 'wedge', 'panel', 'gridstar', 'plate', 'pnc']);

	// put items at their x centre by turning the centres into flow margins
	function place(list) {
		let cur = 0;
		return list.map(([n, x, x2, label]) => {
			let w = 32;
			if (n === 'dd') w = 8;
			if (n === 'sep' || n === 'dots') w = 2;
			let left = x - w / 2;
			if (n === 'combo') {
				w = x2 - x;
				left = x;
			}
			const item = { n, w, m: left - cur, label, on: label === '1' };
			cur = left + w;
			return item;
		});
	}

	const seq = (names, xs) => names.map((n, i) => [n, xs[i]]);

	const row1 = place([
		['dd', 22], ['doc', 47], ['folder', 86], ['sep', 108], ['undo', 130], ['dd', 157], ['sep', 165],
		['wcs', 188], ['dd', 214], ['sep', 222], ['info', 245], ['sep', 267],
		...seq(['grid', 'quad', 'xdim', 'circdots', 'wirebox', 'wand', 'hex', 'step', 'ruler', 'kg', 'mount', 'green', 'prt', 'tree', 'layers', 'steps', 'zyx', 'gold', 'cyl', 'sheet', 'bar'],
			[640, 680, 718, 757, 796, 836, 873, 913, 951, 992, 1030, 1070, 1110, 1148, 1188, 1228, 1267, 1304, 1343, 1382, 1421]),
		['palette2', 1777], ['circles3', 1811]
	]);
	const row2 = place([
		['spiralp', 14], ['camera', 52], ['waves', 90], ['millplan', 130], ['dd', 155], ['sep', 163], ['dots', 172],
		['drillstar', 195], ['sarrow', 235], ['sumcheck', 272],
		...seq(['hatchup', 'circpt', 'curve', 'framepal', 'treepal', 'toolpal', 'rulerv'], [623, 652, 690, 729, 769, 808, 848]),
		['dd', 872], ['sep', 881], ['dots', 884], ['redcirc', 912], ['nozzle1', 949], ['dd', 973], ['nozzle2', 999], ['dd', 1024], ['nozzle3', 1049], ['dd', 1075], ['dd', 1086], ['sep', 1096], ['dots', 1099],
		...seq(['clip', 'barrel', 'drillstar', 'opl1', 'opl2', 'oparrow', 'hatcht', 'wrench2', 'machine'], [1122, 1162, 1200, 1240, 1280, 1320, 1359, 1400, 1433]),
		['boxg', 1777], ['dd', 1793]
	]);
	const row3 = place([
		['spt', 15], ['camt', 52], ['wavt', 92], ['dd', 116], ['sep', 125], ['dots', 129],
		['combo', 136, 184, '1'], ['layer', 208], ['layer', 247], ['dd', 273],
		['full', 618], ['dd', 645], ['lshape', 673], ['dd', 695], ['bluebox', 720], ['dd', 747], ['egg', 771], ['dd', 795], ['wedge', 811], ['dd', 838], ['panel', 861], ['dd', 887],
		['gridstar', 913], ['dd', 938], ['sep', 946], ['plate', 975], ['dd', 1000], ['dd', 1006], ['sep', 1015], ['dots', 1018],
		...seq(['pnc', 'note', 'sto', 'arrowl', 'machbox', 'doorzig', 'owl', 'sbox', 'mwrench', 'tree12', 'arrowt'], [1043, 1081, 1120, 1160, 1197, 1236, 1275, 1314, 1355, 1393, 1431])
	]);
	const row4 = place([
		['combo', -10, 84, ''], ['combo', 92, 231, '整个装配'], ['ghost', 251], ['sep', 270],
		['combo', 610, 702, ''], ['combo', 710, 849, '单条曲线'], ['combo', 856, 996, '单个体'],
		['treea', 1020], ['arrowr', 1047], ['sep', 1064],
		...seq(['diamond', 'line1', 'line2', 'curve2', 'arc', 'circpt', 'circ4', 'cross', 'line1', 'surf'], [1085, 1115, 1146, 1176, 1206, 1239, 1269, 1301, 1330, 1361]),
		['sep', 1380], ['mesh', 1398]
	]);

	const menu = [
		['(F)', 0], ['编辑(E)', 26], ['视图(V)', 75], ['插入(S)', 125], ['格式(R)', 174], ['工具(T)', 224], ['装配(A)', 272],
		['产品制造信息(M)', 323], ['信息(I)', 422], ['分析(L)', 468], ['首选项(P)', 523], ['浩强工具v2.58', 584],
		['窗口(O)', 668], ['GC工具箱', 720], ['星空 V6.936F', 781], ['帮助(H)', 859]
	];

	const strip = ['millar', 'axes', 'nodes', 'cube1', 'cube2', 'cube3', 'stamp', 'heart', 'curvs', 'redh', 'rulerb', 'tri', 'arcr', 'circr', 'cubedots', 'rhook', 'crossb', 'wire2', 'tooln'];

	// column right edges of the navigator
	const edges = [195, 230, 283, 314, 370, 396, 442, 490, 550, 605, 664, 716];
	const cols = edges.map((e, i) => e - (i ? edges[i - 1] : 0));
	const headers = { 0: '名称', 1: '刀...', 2: '刀具', 10: '速度' };
	const rowCount = Array.from({ length: 35 }, (_, i) => i);
	const topTicks = Array.from({ length: 25 }, (_, i) => i);
	const sheetLines = Array.from({ length: 52 }, (_, i) => i);
</script>

{#snippet icon(name, size = 32)}
	<svg class="ico" width={size} height={size} viewBox="0 0 32 32">{@html ICONS[name]}</svg>
{/snippet}

{#snippet toolbar(items)}
	<div class="tbar">
		{#each items as it}
			{#if it.n === 'dd'}
				<i class="dd" style="margin-left:{it.m}px"></i>
			{:else if it.n === 'sep'}
				<i class="sep" style="margin-left:{it.m}px"></i>
			{:else if it.n === 'dots'}
				<i class="dots" style="margin-left:{it.m}px"></i>
			{:else if it.n === 'combo'}
				<span class="combo" class:on={it.on} style="margin-left:{it.m}px;width:{it.w}px">{it.label}<i class="dd"></i></span>
			{:else}
				<span class="cell" class:dim={!COLOURED.has(it.n)} style="margin-left:{it.m}px">{@render icon(it.n)}</span>
			{/if}
		{/each}
	</div>
{/snippet}

{#snippet chev(up = true)}
	<svg class="chev" width="14" height="9" viewBox="0 0 14 9"><polyline points={up ? '1.500,7.500 7,2 12.500,7.500' : '1.500,1.500 7,7 12.500,1.500'} fill="none" stroke="#2e88bb" stroke-width="2" /></svg>
{/snippet}

{#snippet head(title)}
	<div class="head"><span>{title}</span>{@render chev(true)}</div>
{/snippet}

{#snippet bar(title)}
	<section class="fold"><span>{title}</span>{@render chev(false)}</section>
{/snippet}

{#snippet sel(text, cls = '')}
	<span class="sel {cls}"><b>{text}</b><i class="dd"></i></span>
{/snippet}

{#snippet num(text, cls = '')}
	<span class="num {cls}"><span class="clip"><span>{text}</span></span></span>
{/snippet}

{#snippet ib(name, faded = false)}
	<span class="ib" class:faded>{@render icon(name, 27)}</span>
{/snippet}

{#snippet footer()}
	<div class="foot"><span class="ok">确定</span><span class="no">取消</span></div>
{/snippet}

{#snippet gear()}
	<svg width="16" height="16" viewBox="0 0 16 16"><circle cx="8" cy="8" r="4.500" fill="none" stroke="#fff" stroke-width="3" /><path d="M8 0v3M8 13v3M0 8h3M13 8h3M2.300 2.300l2 2M11.700 11.700l2 2M2.300 13.700l2-2M11.700 4.300l2-2" stroke="#fff" stroke-width="2.200" /></svg>
{/snippet}

{#snippet tabs(active)}
	<div class="tabs">
		<div class="tabrow top">
			<span class="tab a">拐角</span><span class="tab b">连接</span><span class="tab c">空间范围</span><span class="tab d">更多</span>
		</div>
		<div class="tabrow low" class:alt={active === 1}>
			<span class="tab e" class:act={active === 0}>策略</span><span class="tab f" class:act={active === 1}>多刀路</span><span class="tab g">余量</span>
		</div>
	</div>
{/snippet}

<div class="page">
	<div class="ticks">
		{#each topTicks as t}
			<i></i>
		{/each}
	</div>

	<div class="stage">
		<div class="win">
			<div class="titlebar">
				<span class="apptitle">NX 10.0.3.5 - 加工 - [实体轮廓铣3D和轮廓3D.prt （修改的）]</span>
				<span class="siemens">SIEMENS</span>
				<i class="wmin"></i>
				<i class="wmax"></i>
			</div>
			<div class="menubar">
				{#each menu as [m, x]}
					<span style="left:{x}px">{m}</span>
				{/each}
				<i class="mmin"></i>
			</div>

			<div class="rows">
				<div class="line">
					<span class="auto">启动</span>
					{@render toolbar(row1)}
				</div>
				<div class="line">{@render toolbar(row2)}</div>
				<div class="line">{@render toolbar(row3)}</div>
				<div class="line last">{@render toolbar(row4)}</div>
			</div>

			<div class="work">
				<div class="nav">
					<div class="navtitle"><span>工序导航器 - 几何</span><i class="restore"></i></div>
					<div class="grid">
						<div class="gr hd">
							{#each cols as w, j}
								<span class="gc" class:blk={j === 0} style="width:{w}px">{headers[j] ?? ''}</span>
							{/each}
						</div>
						{#each rowCount as r}
							<div class="gr" class:odd={r % 2 === 1}>
								{#each cols as w, j}
									<span class="gc" class:blk={j === 0} class:pick={r === 4 && j > 0 && j < 11} style="width:{w}px">
										{#if j === 0 && r === 0}
											<span class="tx">GEOMETRY</span>
										{:else if j === 0 && r === 1}
											<span class="lnk l1"></span>{@render icon('nfolder', 15)}<span class="tx">未用项</span>
										{:else if j === 0 && r === 2}
											<span class="minus"></span>{@render icon('ntriad', 16)}<span class="tx">MCS_MILL</span>
										{:else if j === 0 && r === 3}
											<span class="lnk l2"></span>{@render icon('ncube', 15)}<span class="tx">WORKPIECE</span>
										{:else if j === 0 && r === 4}
											<span class="lnk l3"></span>{@render icon('nbulb', 18)}<span class="opi">{@render icon('nop', 16)}</span><span class="tx sel-tx">SOLID_PROFILE_3D</span>
										{:else if j === 1 && r === 4}
											{@render icon('ncheck', 15)}
										{:else if j === 2 && r === 4}
											D8
										{:else if j === 10 && r === 4}
											2400 r...
										{/if}
									</span>
								{/each}
							</div>
						{/each}
					</div>
				</div>
				<div class="gutter"></div>
				<div class="strip">
					<i class="stripdots"></i>
					{#each strip as s}
						<span class="sc">{@render icon(s, 30)}</span>
					{/each}
				</div>
				<div class="view">
					<svg width="1043" height="743" viewBox="770 215 1043 743">
						<defs>
							<linearGradient id="gold" gradientUnits="userSpaceOnUse" x1="846" y1="482" x2="884" y2="494">
								<stop offset="0" stop-color="#a58f2c" /><stop offset=".5" stop-color="#bda737" /><stop offset="1" stop-color="#a8922e" />
							</linearGradient>
						</defs>
						<polygon points="770,215 1176,215 1333,549 858,511 770,324" fill="#c5dce1" stroke="#3e4a4c" stroke-width=".8" />
						<polygon points="770,324 858,511 843,563 809,489 800,523 770,459" fill="#76868a" stroke="#3e4a4c" stroke-width=".5" />
						<polygon points="809,489 826,525 800,523" fill="#5e6b6e" stroke="#3e4a4c" stroke-width=".5" />
						<polygon points="858,511 1333,549 1311,637 834,596" fill="#616c6e" stroke="#2e3638" stroke-width=".8" />
						<polygon points="918,215 959,215 941,284 903,276" fill="#808a8f" />
						<polygon points="903,277 941,286 883,502 845,490" fill="url(#gold)" />
						<ellipse cx="921.500" cy="280" rx="20" ry="9" transform="rotate(12 921.500 280)" fill="#b0a24c" stroke="#222" stroke-width=".8" />
						<ellipse cx="864.500" cy="495" rx="20" ry="9.500" transform="rotate(12 864.500 495)" fill="#c4b036" stroke="#222" stroke-width=".8" />
						<path d="M863 495l2-8" stroke="#777" stroke-width="2" />
						<!-- work axes -->
						<path d="M975 275L990 215" stroke="#0a0ac8" stroke-width="1.500" />
						<path d="M975 275L1070 282" stroke="#1e8a2e" stroke-width="1.200" />
						<path d="M1053 277l19 6-19 2z" fill="#1e8a2e" />
						<path d="M975 275L998 322" stroke="#d82c2c" stroke-width="1.200" />
						<path d="M993 318l6-3 1 12z" fill="#d82c2c" />
						<text x="1059" y="297" class="axis" fill="#3b9a5a">YM</text>
						<text x="982" y="339" class="axis" fill="#d85a5a">XM</text>
						<!-- tool path -->
						<path d="M859 511L833 613" stroke="#0000e8" stroke-width="2.600" stroke-dasharray="10 5" />
						<path d="M1378 537L1345 665" stroke="#0000e8" stroke-width="2.600" stroke-dasharray="10 5" />
						<polygon points="851,564 1330,603 1327,611 849,574" fill="#00ffff" />
						<polygon points="841,607 1320,644 1317,654 840,617" fill="#00ffff" />
						<path d="M1329 603q20 3 28 14l-2 7q-9-11-28-13z" fill="#f6cdd0" stroke="#f0b040" stroke-width=".8" />
						<path d="M1319 644q20 4 28 14l-2 6q-9-10-28-11z" fill="#f6cdd0" stroke="#f0b040" stroke-width=".8" />
						<path d="M1358 598l3 0-5 14-3-1z M1347 640l3 0-5 13-3-1z" transform="translate(0 16)" fill="#f0b000" />
						<path d="M851 564q-11 0-13 8t2 9l3-6 8-1z" fill="#f6cdd0" stroke="#f0a800" />
						<path d="M841 607q-10 0-12 7 0 7 4 9l3-6 5 0z" fill="#f6cdd0" stroke="#f0a800" />
						<!-- triad in the corner -->
						<path d="M835 954L842 925" stroke="#1a3fd0" stroke-width="2" />
						<path d="M838 930l5-10 2 11z" fill="#1a3fd0" />
						<text x="840" y="920" class="axis" fill="#4a6ad0">Z</text>
						<path d="M838 934h24l8 6v18M838 934v24M862 934v24M838 944h24" fill="none" stroke="#aaa" stroke-width=".7" />
						<circle cx="835" cy="954" r="2.500" fill="#ddd" />
					</svg>
				</div>
				<div class="rail"></div>
			</div>
		</div>

		<div class="sheet">
			{#each sheetLines as l}<i></i>{/each}
		</div>
	</div>

	<!-- operation dialog -->
	<div class="dlg d1">
		<div class="cap">{@render gear()}<span>实体轮廓 3D - [SOLID_PROFILE_3D]</span><em>×</em></div>
		<div class="body">
			<section class="sec s1">
				{@render head('几何体')}
				<div class="row r34 t"><label>几何体</label>{@render sel('MCS_MILL', 'w117')}{@render ib('gnew')}{@render ib('wrench')}</div>
				<div class="row r34"><label>指定部件</label>{@render ib('part')}{@render ib('flash')}</div>
				<div class="row r34"><label>指定检查</label>{@render ib('redpart')}{@render ib('flashg', true)}</div>
				<div class="row r34"><label>指定壁</label>{@render ib('wall')}{@render ib('flash')}</div>
				<div class="row r34"><label>指定修剪边界</label>{@render ib('trim')}{@render ib('flashg', true)}</div>
			</section>
			<section class="sec s2">
				{@render head('工具')}
				<div class="row r34 t"><label>刀具</label>{@render sel('D8 (铣刀-5 参数)', 'w117')}{@render ib('tstar')}{@render ib('wrflash')}</div>
				<div class="sub"><span>输出</span>{@render chev(false)}</div>
				<div class="sub"><span>换刀设置</span>{@render chev(false)}</div>
			</section>
			{@render bar('刀轴')}
			<section class="sec s3">
				{@render head('刀轨设置')}
				<div class="row r34 t"><label>方法</label>{@render sel('METHOD', 'w117')}{@render ib('method')}{@render ib('wrenchg', true)}</div>
				<div class="row r26"><label>部件余量</label>{@render num('0.00000', 'w82')}<span class="ib lockb">{@render icon('lock', 20)}</span></div>
				<div class="row r27"><label>跟随</label>{@render sel('壁的底部', 'w141')}</div>
				<div class="row r25"><label>Z 向深度偏置</label>{@render num('0.00000', 'w82')}</div>
				<div class="row r34 lo"><label>切削参数</label>{@render ib('hatch1')}</div>
				<div class="row r34 lo"><label>非切削移动</label>{@render ib('hatch2')}</div>
				<div class="row r34 lo"><label>进给率和速度</label>{@render ib('feed')}</div>
			</section>
			{@render bar('机床控制')}
			{@render bar('程序')}
			{@render bar('描述')}
			{@render bar('选项')}
			<section class="sec s4">
				{@render head('操作')}
				<div class="ops">{@render ib('opmill')}{@render ib('ops')}{@render ib('opcheck')}{@render ib('opdoc')}</div>
			</section>
			{@render footer()}
		</div>
	</div>

	<!-- cut parameters, strategy tab -->
	<div class="dlg d2">
		<div class="cap">{@render gear()}<span>切削参数</span><em>×</em></div>
		<div class="tabbody">
			{@render tabs(0)}
			<div class="panel p2">
				<div class="ps h67">{@render head('切削')}<div class="row"><label class="ls">切削方向</label>{@render sel('混合', 'w141')}</div></div>
				<div class="ps h67">{@render head('合并')}<div class="row"><label>合并距离</label>{@render num('0.00000', 'w82 picked')}{@render sel('mm', 'w63')}</div></div>
				<div class="ps h67">{@render head('延伸')}<div class="row"><label>在边上延伸</label>{@render num('0.00000', 'w82')}{@render sel('mm', 'w63')}</div></div>
				<div class="ps h67">{@render head('毛坯')}<div class="row"><label>毛坯距离</label>{@render num('0.00000', 'w82')}</div></div>
			</div>
			{@render footer()}
		</div>
	</div>

	<!-- cut parameters, multiple passes tab -->
	<div class="dlg d3">
		<div class="tabbody">
			{@render tabs(1)}
			<div class="panel p3">
				<div class="ps h139">
					{@render head('多条侧面刀路')}
					<div class="row ck"><i class="box"></i><label>多条侧面刀路</label></div>
					<div class="row in"><label>侧面余量偏置</label>{@render num('3.00000', 'w82')}</div>
					<div class="row dr"><label>步进方法</label>{@render sel('增量', 'w141')}</div>
					<div class="row in"><label>增量</label>{@render num('0.50000', 'w82')}</div>
				</div>
				<div class="ps h141">
					{@render head('多重深度')}
					<div class="row ck"><i class="box"></i><label>多重深度</label></div>
					<div class="row in"><label>深度余量偏置</label>{@render num('20.00000', 'w82')}</div>
					<div class="row dr"><label>步进方法</label>{@render sel('增量', 'w141')}</div>
					<div class="row in"><label>增量</label>{@render num('10.00000', 'w82')}</div>
				</div>
				<div class="ps h65">
					{@render head('顺序')}
					<div class="row"><span class="fullsel">{@render sel('侧面刀路优先', 'w280')}</span></div>
				</div>
			</div>
			{@render footer()}
		</div>
	</div>

	<!-- hand drawn notes over the screenshot -->
	<svg class="marks" width="1872" height="958" viewBox="0 0 1872 958">
		<polygon points="876,703 620,588 605,580 589,583 598,596 607,591 620,600" fill="#fb2314" />
		<polygon points="1370,139 1585,146.500 1583,144 1598,154 1582,162 1584,157" fill="#fb2314" />
		<polygon points="1253,715 1439,643 1438,639 1455,642 1443,655 1441,650" fill="#fb2314" />
		<polygon points="1268,804 1610,829 1610,825 1625,835 1609,842 1611,838" fill="#fb2314" />
	</svg>
	<span class="note n1">可以双向加工</span>
	<span class="note n2">加工深度可以加深或缩短</span>
	<span class="note n3">给正值加深负值缩短</span>
	<span class="note n4">侧面多切</span>
	<span class="note n5">深度多层</span>
	<span class="mark">UG爱好者论坛@a15955927362</span>
</div>

<style>
	:global(body) {
		margin: 0;
		background: #fff;
	}

	.page {
		position: relative;
		width: 1872px;
		height: 958px;
		box-sizing: border-box;
		padding-bottom: 2px;
		overflow: hidden;
		background: #fff;
		font-family: 'Noto Sans', 'Noto Sans CJK SC', sans-serif;
		font-size: 12px;
		color: #222;
		display: flex;
		flex-direction: column;
	}

	i {
		display: block;
		font-style: normal;
	}

	.ico {
		display: block;
		flex: none;
		overflow: visible;
	}

	.ticks {
		height: 3px;
		border-bottom: 1px solid #c6cede;
		display: flex;
		flex: none;
	}

	.ticks i {
		width: 1px;
		height: 3px;
		margin-left: 71px;
		background: #c6cede;
	}

	.stage {
		display: flex;
		flex: 1;
		min-height: 0;
	}

	.win {
		width: 1828px;
		flex: none;
		display: flex;
		flex-direction: column;
	}

	.titlebar {
		height: 25px;
		flex: none;
		display: flex;
		align-items: center;
		position: relative;
		background: #fff;
	}

	.apptitle {
		margin-left: -4px;
		font-family: 'Noto Sans CJK SC', sans-serif;
		font-size: 13px;
		color: #222;
		white-space: nowrap;
	}

	.siemens {
		position: absolute;
		left: 1716px;
		top: 6px;
		font: 700 14px 'Liberation Sans', sans-serif;
		letter-spacing: -0.4px;
		color: #009999;
	}

	.wmin {
		position: absolute;
		left: 1804px;
		top: 16px;
		width: 8px;
		height: 2px;
		background: #555;
	}

	.wmax {
		position: absolute;
		left: 1825px;
		top: 11px;
		width: 3px;
		height: 6px;
		border: 1px solid #555;
		border-right: none;
	}

	.menubar {
		height: 27px;
		flex: none;
		background: #c8d7d5;
		position: relative;
	}

	/* menu items sit at uneven spots, no shared gap */
	.menubar span {
		position: absolute;
		top: 0;
		line-height: 25px;
		white-space: nowrap;
		color: #222;
		font-family: 'Noto Sans CJK SC', sans-serif;
	}

	.mmin {
		position: absolute;
		left: 1814px;
		top: 16px;
		width: 8px;
		height: 2px;
		background: #333;
	}

	.rows {
		flex: none;
	}

	.line {
		height: 42px;
		box-sizing: border-box;
		border-bottom: 1px solid #e2e2e2;
		position: relative;
		overflow: hidden;
	}

	.line.last {
		height: 34px;
		border-bottom: 1px solid #9aa0a4;
	}

	.line:first-child {
		height: 41px;
	}

	.auto {
		position: absolute;
		left: -8px;
		top: 11px;
		line-height: 18px;
	}

	.tbar {
		display: flex;
		align-items: center;
		height: 100%;
		white-space: nowrap;
	}

	.cell {
		flex: none;
	}

	.cell.dim {
		opacity: 0.72;
	}

	.dd {
		flex: none;
		width: 0;
		height: 0;
		border: 4px solid transparent;
		border-top: 4px solid #222;
		border-bottom: none;
		margin-top: 8px;
	}

	.sep {
		flex: none;
		width: 1px;
		height: 34px;
		margin-right: 1px;
		background: #dcdcdc;
	}

	.dots {
		flex: none;
		width: 2px;
		height: 32px;
		border-left: 2px dotted #a8a8a8;
		box-sizing: border-box;
	}

	.combo {
		flex: none;
		height: 20px;
		box-sizing: border-box;
		border: 1px solid #b4b4b4;
		background: #fff;
		color: #b4b4b4;
		display: flex;
		align-items: center;
		justify-content: space-between;
		padding: 0 5px 0 3px;
		font-size: 12px;
	}

	.combo .dd {
		border-top-color: #aaa;
		margin-top: 1px;
	}

	.combo.on {
		color: #1a3a80;
		font-weight: 500;
	}

	.combo.on .dd {
		border-top-color: #222;
	}

	.work {
		flex: 1;
		min-height: 0;
		display: flex;
		background: #fff;
	}

	.nav {
		width: 717px;
		flex: none;
		display: flex;
		flex-direction: column;
		overflow: hidden;
	}

	.navtitle {
		height: 31px;
		flex: none;
		display: flex;
		align-items: center;
		justify-content: space-between;
		padding-right: 12px;
		white-space: nowrap;
	}

	.navtitle span {
		margin-left: -1px;
	}

	.restore {
		width: 10px;
		height: 7px;
		border: 1px solid #222;
		border-top-width: 3px;
		margin-top: 2px;
	}

	.grid {
		flex: 1;
		min-height: 0;
		overflow: hidden;
		border-top: 1px solid #d8d8d8;
		border-right: 1px solid #d8d8d8;
	}

	.gr {
		display: flex;
		height: 20px;
		box-sizing: border-box;
		border-bottom: 1px solid #ececec;
	}

	.gr.hd {
		background: #f0f0f0;
		border-bottom: 2px solid #d4d4d4;
	}

	.gr.odd {
		background: #fafafa;
	}

	.gc {
		flex: none;
		box-sizing: border-box;
		border-right: 1px solid #ececec;
		display: flex;
		align-items: center;
		gap: 2px;
		padding-left: 5px;
		white-space: nowrap;
	}

	.hd .gc {
		border-right-color: #d8d8d8;
		color: #222;
	}

	.gc.blk {
		border-right: 1px solid #000;
		padding-left: 0;
	}

	.gc.pick {
		background: #3399ff;
		color: #fff;
		border-right-color: #fff;
	}

	.tx {
		line-height: 19px;
	}

	.lnk {
		height: 10px;
		flex: none;
		border-left: 1px dotted #777;
		border-bottom: 1px dotted #777;
		box-sizing: border-box;
		margin-top: -8px;
	}

	.l1 {
		margin-left: 4px;
		width: 10px;
	}

	.l2 {
		margin-left: 23px;
		width: 10px;
	}

	.l3 {
		margin-left: 23px;
		width: 7px;
	}

	.opi {
		margin-left: -3px;
		flex: none;
	}

	.minus {
		width: 7px;
		height: 7px;
		margin: 0 5px 0 -1px;
		border: 1px solid #888;
		background: linear-gradient(#555, #555) center / 5px 1px no-repeat #fff;
		flex: none;
	}

	.sel-tx {
		background: #3399ff;
		color: #fff;
		flex: 1;
		align-self: stretch;
		padding-left: 3px;
		margin-left: -2px;
	}

	.gutter {
		width: 10px;
		flex: none;
		border-right: 1px solid #9aa0a4;
	}

	.strip {
		width: 42px;
		flex: none;
		display: flex;
		flex-direction: column;
		align-items: center;
		background: #fff;
	}

	.stripdots {
		width: 36px;
		height: 0;
		margin: 16px 0 4px;
		border-top: 2px dotted #aaa;
	}

	.sc {
		height: 39px;
		display: flex;
		align-items: center;
		flex: none;
	}

	.view {
		flex: none;
		width: 1043px;
		background: linear-gradient(#8080ff, #c0c0c0 590px);
		overflow: hidden;
	}

	.view svg {
		display: block;
	}

	.axis {
		font: 12px 'Noto Sans', sans-serif;
	}

	.rail {
		flex: 1;
		background: #fff;
	}

	.sheet {
		flex: 1;
		border-right: 3px solid #e4e6ee;
		padding-top: 17px;
		overflow: hidden;
	}

	.sheet i {
		height: 17px;
		border-bottom: 1px solid #c4ccdc;
	}

	/* floating dialogs */
	.dlg {
		position: absolute;
		box-sizing: border-box;
		background: #e6e6e6;
		border: 1px solid #b8b8b8;
		border-top: none;
		display: flex;
		flex-direction: column;
	}

	.d1 {
		left: 278px;
		top: 57px;
		width: 328px;
		height: 872px;
	}

	.d2 {
		left: 1446px;
		top: 21px;
		width: 328px;
		height: 492px;
	}

	.d3 {
		left: 1451px;
		top: 518px;
		width: 316px;
		height: 438px;
		border: none;
		overflow: hidden;
	}

	.cap {
		height: 26px;
		flex: none;
		background: #5c8780;
		color: #f2f6f5;
		display: flex;
		align-items: center;
		padding: 0 8px;
		gap: 9px;
		font-size: 13.500px;
		margin: 0 -1px;
	}

	.d2 .cap {
		height: 24px;
	}

	.cap em {
		margin-left: auto;
		font: 400 28px 'Liberation Sans', sans-serif;
		line-height: 22px;
		color: #fff;
	}

	.body {
		flex: 1;
		padding: 4px 5px 0;
		display: flex;
		flex-direction: column;
		gap: 4px;
	}

	.sec,
	.fold {
		background: #fff;
		border-bottom: 2px solid #cacaca;
		box-sizing: border-box;
		flex: none;
	}

	.s1 {
		height: 206px;
	}

	.s2 {
		height: 122px;
	}

	.s3 {
		height: 250px;
	}

	.s4 {
		height: 70px;
	}

	.fold {
		height: 23px;
		padding: 0 5px 0 6px;
		display: flex;
		align-items: center;
		justify-content: space-between;
		color: #3d8fc4;
		font-size: 14px;
	}

	.head {
		height: 30px;
		box-sizing: border-box;
		padding: 0 5px 6px 6px;
		display: flex;
		align-items: center;
		justify-content: space-between;
		color: #3d8fc4;
		font-size: 14px;
	}

	.row {
		display: flex;
		align-items: flex-start;
		gap: 2px;
		padding: 0 9px;
		height: 25px;
		box-sizing: border-box;
	}

	.row label {
		flex: 1;
		white-space: nowrap;
		color: #222;
		line-height: 23px;
	}

	.r34 {
		height: 34px;
	}

	.r34 label {
		line-height: 37px;
	}

	.r34.t label {
		line-height: 25px;
	}

	.r34.lo label {
		line-height: 30px;
	}

	.r26 {
		height: 26px;
	}

	.r27 {
		height: 27px;
	}

	.r27 label {
		line-height: 25px;
	}

	.r25 {
		height: 25.500px;
	}

	.sel {
		flex: none;
		height: 25px;
		box-sizing: border-box;
		border: 1px solid #b0b0b0;
		background: #fff;
		display: flex;
		align-items: center;
		justify-content: space-between;
		padding: 0 6px 0 4px;
	}

	.sel b {
		font-weight: 400;
		white-space: nowrap;
		overflow: hidden;
	}

	.sel .dd {
		margin-top: 1px;
	}

	.w117 {
		width: 117px;
	}

	.w141 {
		width: 141px;
	}

	.w63 {
		width: 63px;
	}

	.w82 {
		width: 82px;
	}

	.w280 {
		width: 280px;
	}

	.fullsel {
		flex: 1;
	}

	.num {
		flex: none;
		height: 23px;
		box-sizing: border-box;
		border: 1px solid #b0b0b0;
		background: #fff;
		display: flex;
		padding: 2px 2px 2px 3px;
	}

	.clip {
		flex: 1;
		overflow: hidden;
		display: flex;
		justify-content: flex-end;
		align-items: center;
	}

	.clip span {
		flex: none;
		font: 16px 'Liberation Mono', monospace;
		letter-spacing: -0.4px;
		color: #333;
		margin-right: -7.500px;
	}

	.num.picked .clip {
		background: #3399ff;
	}

	.num.picked .clip span {
		color: #fff;
	}

	.ib {
		flex: none;
		width: 32px;
		height: 32px;
		box-sizing: border-box;
		border: 1px solid #b0b0b0;
		background: #fff;
		display: flex;
		align-items: center;
		justify-content: center;
	}

	.ib.faded {
		border-color: #d4d4d4;
	}

	.lockb {
		width: 24px;
		height: 23px;
		border-color: #c8c8c8;
	}

	.sub {
		margin: 0 9px 2px;
		height: 24px;
		box-sizing: border-box;
		background: #f0f5f5;
		border: 1px solid #cdd6d6;
		display: flex;
		align-items: center;
		justify-content: space-between;
		padding: 0 6px 0 8px;
		color: #5f9ab5;
	}

	.ops {
		display: flex;
		justify-content: center;
		gap: 2px;
		margin-left: 1px;
	}

	.foot {
		margin-top: auto;
		display: flex;
		justify-content: flex-end;
		gap: 5px;
		padding: 0 10px 10px 0;
	}

	.d3 .foot {
		margin-top: 13px;
	}

	.ok,
	.no {
		width: 54px;
		height: 25px;
		box-sizing: border-box;
		display: flex;
		align-items: center;
		justify-content: center;
	}

	.ok {
		background: #9ccbe6;
		border: 1px solid #5ba8d8;
	}

	.no {
		background: #c7c9cc;
		border: 1px solid #a8a8a8;
	}

	.tabbody {
		flex: 1;
		display: flex;
		flex-direction: column;
		min-height: 0;
	}

	.tabs {
		margin-top: 10px;
		padding-left: 11px;
	}

	.d3 .tabs {
		margin-top: 6px;
		padding-left: 6px;
	}

	.tabrow {
		display: flex;
		height: 28px;
		position: relative;
	}

	.tab {
		box-sizing: border-box;
		border: 1px solid #d4d4d4;
		background: #e8e8e8;
		display: flex;
		align-items: center;
		justify-content: center;
		height: 28px;
	}

	.tab.a {
		width: 73px;
	}

	.tab.b {
		width: 73px;
	}

	.tab.c {
		width: 85px;
	}

	.tab.d {
		width: 74px;
	}

	.tab.e {
		width: 105px;
	}

	.tab.f {
		width: 98px;
	}

	.tab.g {
		width: 102px;
	}

	.low.alt .tab.e {
		width: 100px;
	}

	.low.alt .tab.f {
		width: 105px;
	}

	.low.alt .tab.g {
		width: 100px;
	}

	.tab.act {
		background: #fff;
		border-color: #c4c4c4;
		border-bottom: none;
		color: #3d8fc4;
		height: 31px;
		margin-top: -2px;
		position: relative;
		z-index: 2;
		padding-bottom: 3px;
	}

	.panel {
		box-sizing: border-box;
		background: #fff;
		border: 1px solid #c4c4c4;
		margin-left: 9px;
		margin-top: 1px;
		padding: 0 4px;
		width: 308px;
	}

	.d3 .panel {
		margin-left: 4px;
		margin-top: 0;
	}

	.p2 {
		height: 353px;
	}

	.p3 {
		height: 354px;
	}

	.ps {
		border-bottom: 2px solid #d8d8d8;
		box-sizing: border-box;
	}

	.ps .head {
		padding: 0 4px 2px 5px;
	}

	.ps .row {
		padding: 0 6px 0 9px;
		margin-top: 1px;
	}

	.ps .row.in {
		height: 24px;
	}

	.ps .row.in label {
		line-height: 22px;
	}

	.ps .row.dr {
		height: 26px;
	}

	.ls,
	.ps .row.dr label {
		line-height: 24px !important;
	}

	.h67 {
		height: 66.500px;
	}

	.h139 {
		height: 139px;
	}

	.h141 {
		height: 141px;
		padding-top: 1px;
	}

	.h65 {
		height: 65px;
		padding-top: 1px;
	}

	.ps .ck {
		height: 24px;
		align-items: center;
		gap: 5px;
		margin-top: 0;
	}

	.ck label {
		flex: none;
		line-height: 23px;
	}

	.box {
		width: 12px;
		height: 12px;
		border: 1px solid #8a8a8a;
		background: #e6e8f4;
		position: relative;
		flex: none;
	}

	.box::after {
		content: '';
		position: absolute;
		left: 3px;
		top: 0;
		width: 4px;
		height: 8px;
		border: solid #3a3ab0;
		border-width: 0 2px 2px 0;
		transform: rotate(40deg);
	}

	.marks {
		position: absolute;
		left: 0;
		top: 0;
		pointer-events: none;
	}

	.note {
		position: absolute;
		color: #f33a2e;
		font-size: 21px;
		line-height: 24px;
		white-space: nowrap;
	}

	.n1 {
		left: 1245px;
		top: 128px;
		color: #fb2314;
	}

	.n2 {
		left: 819px;
		top: 703px;
	}

	.n3 {
		left: 836px;
		top: 734px;
	}

	.n4 {
		left: 1169px;
		top: 693px;
	}

	.n5 {
		left: 1152px;
		top: 779px;
	}

	.mark {
		position: absolute;
		left: 1666px;
		top: 936px;
		font: 15px 'Liberation Mono', 'Noto Sans CJK SC', monospace;
		letter-spacing: -0.3px;
		color: #8a8a8a;
		text-shadow: 1px 1px 0 #fff;
		white-space: nowrap;
	}
</style>
